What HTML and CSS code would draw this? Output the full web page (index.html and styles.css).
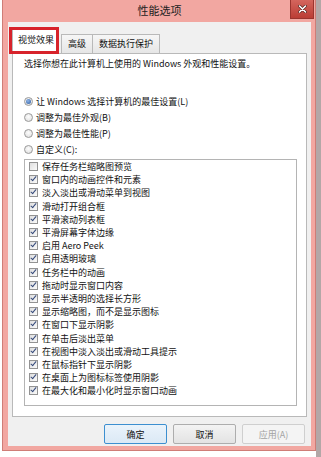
FILE: index.html
```html
<!DOCTYPE html>
<html lang="zh-CN">
<head>
    <meta charset="UTF-8">
    <meta name="viewport" content="width=device-width, initial-scale=1.0">
    <title>性能选项</title>
    <link rel="stylesheet" href="styles.css">
</head>
<body>
    <div class="window">
        <div class="titlebar">
            <span class="title">性能选项</span>
            <div class="close">
                <svg width="9" height="8" viewBox="0 0 9 8">
                    <path d="M1.5 1 L7.5 7 M7.5 1 L1.5 7" stroke="#5a2420" stroke-width="3" stroke-linecap="round"/>
                    <path d="M1.5 1 L7.5 7 M7.5 1 L1.5 7" stroke="#fff" stroke-width="1.6" stroke-linecap="round"/>
                </svg>
            </div>
        </div>

        <div class="client">
            <div class="tabs">
                <div class="tab active">视觉效果</div>
                <div class="tab">高级</div>
                <div class="tab">数据执行保护</div>
                <div class="highlight"></div>
            </div>

            <div class="panel">
                <p class="intro">选择你想在此计算机上使用的 Windows 外观和性能设置。</p>

                <ul class="radios">
                    <li><span class="radio checked"></span>让 Windows 选择计算机的最佳设置(L)</li>
                    <li><span class="radio"></span>调整为最佳外观(B)</li>
                    <li><span class="radio"></span>调整为最佳性能(P)</li>
                    <li><span class="radio"></span>自定义(C):</li>
                </ul>

                <ul class="list">
                    <li><span class="box"></span>保存任务栏缩略图预览</li>
                    <li><span class="box checked"></span>窗口内的动画控件和元素</li>
                    <li><span class="box checked"></span>淡入淡出或滑动菜单到视图</li>
                    <li><span class="box checked"></span>滑动打开组合框</li>
                    <li><span class="box checked"></span>平滑滚动列表框</li>
                    <li><span class="box checked"></span>平滑屏幕字体边缘</li>
                    <li><span class="box checked"></span>启用 Aero Peek</li>
                    <li><span class="box checked"></span>启用透明玻璃</li>
                    <li><span class="box checked"></span>任务栏中的动画</li>
                    <li><span class="box checked"></span>拖动时显示窗口内容</li>
                    <li><span class="box checked"></span>显示半透明的选择长方形</li>
                    <li><span class="box checked"></span>显示缩略图，而不是显示图标</li>
                    <li><span class="box checked"></span>在窗口下显示阴影</li>
                    <li><span class="box checked"></span>在单击后淡出菜单</li>
                    <li><span class="box checked"></span>在视图中淡入淡出或滑动工具提示</li>
                    <li><span class="box checked"></span>在鼠标指针下显示阴影</li>
                    <li><span class="box checked"></span>在桌面上为图标标签使用阴影</li>
                    <li><span class="box checked"></span>在最大化和最小化时显示窗口动画</li>
                </ul>
            </div>

            <div class="buttons">
                <div class="btn default">确定</div>
                <div class="btn">取消</div>
                <div class="btn disabled">应用(A)</div>
            </div>
        </div>
    </div>
</body>
</html>
```

FILE: styles.css
```css
body {
    margin: 0;
    width: 321px;
    height: 457px;
    font-family: "Noto Sans CJK SC", "Noto Sans", sans-serif;
    color: #111;
    background: linear-gradient(to right, #fff 316px, #b3a7a7 316px);
    overflow: hidden;
}
.window {
    margin-left: 2px;
    width: 314px;
    height: 451px;
    box-sizing: border-box;
    background: #f2a7a1;
    border: 1px solid #cf7d77;
    border-top: none;
    padding: 0 4px 4px 5px;
    display: flex;
    flex-direction: column;
}
.titlebar {
    height: 22px;
    position: relative;
    display: flex;
    justify-content: center;
    align-items: center;
}
.title {
    font-size: 11px;
    color: #222;
    margin-top: -2px;
}
.close {
    position: absolute;
    right: -3px;
    top: 0;
    width: 24px;
    height: 19px;
    background: linear-gradient(#d4655d, #bb3d35);
    border: 1px solid #9a352f;
    border-top: none;
    box-sizing: border-box;
    display: flex;
    justify-content: center;
    align-items: center;
}
.client {
    flex: 1;
    background: #f0f0f0;
    display: flex;
    flex-direction: column;
    padding: 0 4px 0 4px;
}

/* tabs */
.tabs {
    position: relative;
    display: flex;
    align-items: flex-end;
    height: 31px;
}
.tab {
    font-size: 9px;
    height: 19px;
    line-height: 18px;
    padding: 0 6px;
    border: 1px solid #b9b9b9;
    border-bottom: none;
    margin-right: -1px;
    background: linear-gradient(#f6f6f6, #e6e6e6);
    box-sizing: border-box;
}
.tab.active {
    height: 25px;
    line-height: 20px;
    padding: 0 4px 0 5px;
    background: #fff;
    margin-bottom: -1px;
    position: relative;
    z-index: 1;
    margin-right: 2px;
}
.highlight {
    position: absolute;
    left: -3px;
    top: 5px;
    width: 50px;
    height: 27px;
    border: 3px solid #d7232b;
    box-sizing: border-box;
    z-index: 2;
}

/* panel */
.panel {
    height: 364px;
    box-sizing: border-box;
    background: #fff;
    border: 1px solid #b9b9b9;
    padding: 4px 9px 0 11px;
}
.intro {
    margin: 0;
    font-size: 9px;
    line-height: 12px;
}
.radios {
    list-style: none;
    margin: 23px 0 0 0;
    padding: 0;
}
.radios li {
    height: 16px;
    display: flex;
    align-items: center;
    font-size: 9px;
}
.radio {
    width: 9px;
    height: 9px;
    border-radius: 50%;
    border: 1px solid #9a9a9a;
    box-sizing: border-box;
    background: radial-gradient(circle at 50% 40%, #fdfdfd, #dcdcdc);
    margin-right: 3px;
    display: flex;
    justify-content: center;
    align-items: center;
}
.radio.checked::after {
    content: "";
    width: 5px;
    height: 5px;
    border-radius: 50%;
    background: radial-gradient(circle at 40% 35%, #8fb4e6, #2a5a9f);
}
.list {
    list-style: none;
    margin: 2px 0 0 0;
    padding: 0 0 0 4px;
    height: 247px;
    box-sizing: border-box;
    border: 1px solid #b4b4b4;
}
.list li {
    height: 13.2px;
    display: flex;
    align-items: center;
    font-size: 9px;
}
.box {
    width: 9px;
    height: 9px;
    border: 1px solid #939393;
    box-sizing: border-box;
    background: linear-gradient(135deg, #dedede, #fafafa);
    margin-right: 4px;
    position: relative;
}
.box.checked::after {
    content: "";
    position: absolute;
    left: 2px;
    top: -1px;
    width: 2px;
    height: 5px;
    border: solid #34497a;
    border-width: 0 1.5px 1.5px 0;
    transform: rotate(40deg);
}

/* buttons */
.buttons {
    display: flex;
    justify-content: flex-end;
    gap: 6px;
    padding: 7px 2px 0 0;
}
.btn {
    width: 63px;
    height: 20px;
    box-sizing: border-box;
    border: 1px solid #adadad;
    border-radius: 2px;
    background: linear-gradient(#f3f3f3, #e3e3e3);
    font-size: 9px;
    display: flex;
    justify-content: center;
    align-items: center;
}
.btn.default {
    border-color: #3c8fd0;
    background: linear-gradient(#eaf3fb, #dbe9f5);
}
.btn.disabled {
    color: #a3a3a3;
    border-color: #cfcfcf;
    background: #f4f4f4;
}
```
